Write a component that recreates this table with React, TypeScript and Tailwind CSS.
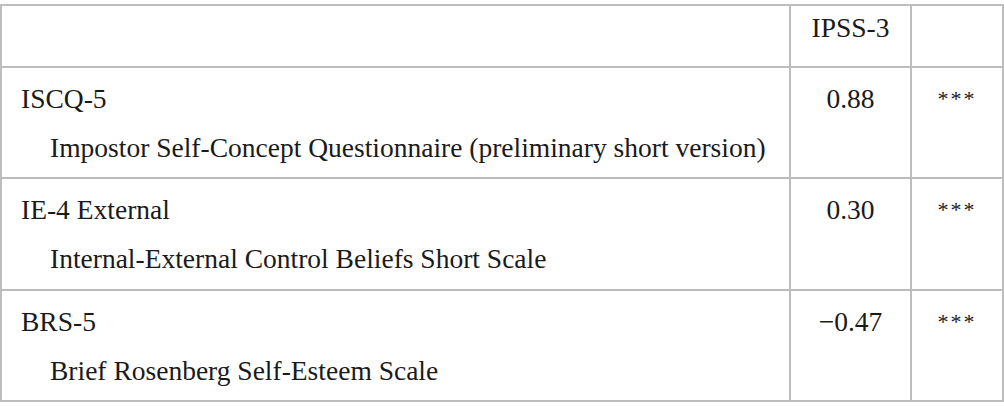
import React from "react";

const rows = [
  {
    code: "ISCQ-5",
    name: "Impostor Self-Concept Questionnaire (preliminary short version)",
    value: "0.88",
    h: "h-[111px]",
  },
  {
    code: "IE-4 External",
    name: "Internal-External Control Beliefs Short Scale",
    value: "0.30",
    h: "h-[112px]",
  },
  {
    code: "BRS-5",
    name: "Brief Rosenberg Self-Esteem Scale",
    value: "\u22120.47",
    h: "h-[111px]",
  },
];

export default function App() {
  return (
    <div className="w-[1004px] h-[419px] bg-white pt-[4px] text-[#1a1a1a] text-[27.5px] font-['Liberation_Serif','Times_New_Roman',serif]">
      <div className="grid grid-cols-[789px_121px_92px] border-t-2 border-l-2 border-[#bdbdbd] w-[1004px]">
        <div className="h-[62px] border-r-2 border-b-2 border-[#bdbdbd]" />
        <div className="h-[62px] border-r-2 border-b-2 border-[#bdbdbd] pt-[6px] leading-[32px] text-center">
          IPSS-3
        </div>
        <div className="h-[62px] border-r-2 border-b-2 border-[#bdbdbd]" />
        {rows.map((r) => (
          <React.Fragment key={r.code}>
            <div className={`${r.h} border-r-2 border-b-2 border-[#bdbdbd] pt-[6px] pl-[19px] leading-[49px]`}>
              <div>{r.code}</div>
              <div className="pl-[29px] whitespace-nowrap">{r.name}</div>
            </div>
            <div className={`${r.h} border-r-2 border-b-2 border-[#bdbdbd] pt-[6px] leading-[49px] text-center`}>
              {r.value}
            </div>
            <div className={`${r.h} border-r-2 border-b-2 border-[#bdbdbd] pt-[6px] leading-[49px] text-center`}>
              <span className="text-[22px] tracking-[2px] align-[2px]">***</span>
            </div>
          </React.Fragment>
        ))}
      </div>
    </div>
  );
}
